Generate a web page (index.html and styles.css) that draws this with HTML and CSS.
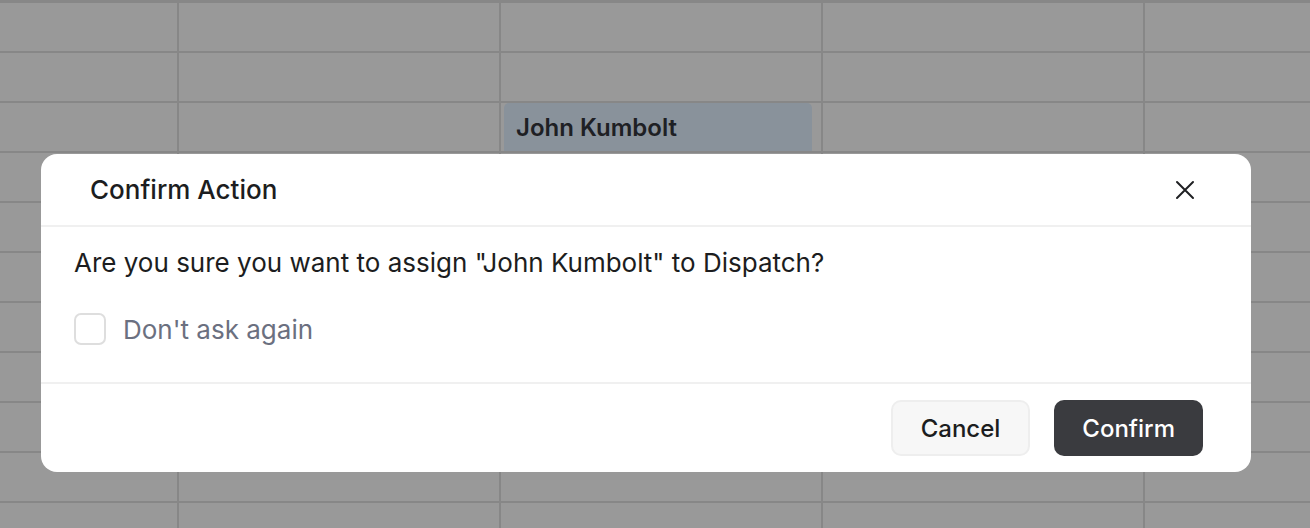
FILE: index.html
```html
<!DOCTYPE html>
<html lang="en">
<head>
  <meta charset="UTF-8">
  <meta name="viewport" content="width=device-width, initial-scale=1.0">
  <title>Confirm Action</title>
  <link rel="stylesheet" href="styles.css">
</head>
<body>
  <div class="sheet">
    <div class="grid">
      <div class="cell"></div><div class="cell"></div><div class="cell"></div><div class="cell"></div><div class="cell"></div>
      <div class="cell"></div><div class="cell"></div><div class="cell"></div><div class="cell"></div><div class="cell"></div>
      <div class="cell"></div><div class="cell"></div>
      <div class="cell cell-filled"><div class="card">John Kumbolt</div></div>
      <div class="cell"></div><div class="cell"></div>
      <div class="cell"></div><div class="cell"></div><div class="cell"></div><div class="cell"></div><div class="cell"></div>
      <div class="cell"></div><div class="cell"></div><div class="cell"></div><div class="cell"></div><div class="cell"></div>
      <div class="cell"></div><div class="cell"></div><div class="cell"></div><div class="cell"></div><div class="cell"></div>
      <div class="cell"></div><div class="cell"></div><div class="cell"></div><div class="cell"></div><div class="cell"></div>
      <div class="cell"></div><div class="cell"></div><div class="cell"></div><div class="cell"></div><div class="cell"></div>
      <div class="cell"></div><div class="cell"></div><div class="cell"></div><div class="cell"></div><div class="cell"></div>
      <div class="cell"></div><div class="cell"></div><div class="cell"></div><div class="cell"></div><div class="cell"></div>
      <div class="cell"></div><div class="cell"></div><div class="cell"></div><div class="cell"></div><div class="cell"></div>
    </div>
  </div>

  <div class="modal">
    <div class="modal-header">
      <h2 class="modal-title">Confirm Action</h2>
      <button class="modal-close" aria-label="Close">
        <svg width="20" height="20" viewBox="0 0 20 20" fill="none" stroke="#1f2023" stroke-width="2" stroke-linecap="round">
          <path d="M2 2 L18 18 M18 2 L2 18"/>
        </svg>
      </button>
    </div>
    <div class="modal-body">
      <p class="modal-text">Are you sure you want to assign "John Kumbolt" to Dispatch?</p>
      <label class="check-row">
        <input type="checkbox" class="check-box">
        <span class="check-label">Don't ask again</span>
      </label>
    </div>
    <div class="modal-footer">
      <button class="btn btn-cancel">Cancel</button>
      <button class="btn btn-confirm">Confirm</button>
    </div>
  </div>
</body>
</html>
```

FILE: styles.css
```css
html, body {
  margin: 0;
  padding: 0;
}
body {
  width: 1310px;
  height: 528px;
  overflow: hidden;
  background-color: #999999;
  font-family: Inter, "Liberation Sans", sans-serif;
  position: relative;
}
.sheet {
  padding-top: 1px;
  background-color: #878787;
  height: 527px;
}
.grid {
  display: grid;
  grid-template-columns: 177px 320px 320px 320px 1fr;
  grid-auto-rows: 48px;
  column-gap: 2px;
  row-gap: 2px;
  padding-top: 2px;
}
.cell {
  background-color: #999999;
}
.cell-filled {
  padding: 0 9px 0 3px;
}
.card {
  height: 100%;
  background-color: #89929b;
  border-radius: 5px 5px 0 0;
  padding: 10px 12px 0;
  box-sizing: border-box;
  font-size: 24px;
  font-weight: 600;
  color: #1e2024;
}

.modal {
  position: absolute;
  left: 41px;
  top: 154px;
  width: 1210px;
  background-color: #ffffff;
  border-radius: 16px;
  overflow: hidden;
}
.modal-header {
  display: flex;
  align-items: center;
  justify-content: space-between;
  height: 71px;
  padding: 0 56px 0 49px;
  border-bottom: 2px solid #f0f0f0;
}
.modal-title {
  margin: 0;
  font-size: 26px;
  font-weight: 500;
  color: #1c1d20;
}
.modal-close {
  display: flex;
  align-items: center;
  justify-content: center;
  width: 20px;
  height: 20px;
  padding: 0;
  border: none;
  background: none;
  cursor: pointer;
}
.modal-body {
  padding: 20px 33px 37px;
  border-bottom: 2px solid #f0f0f0;
}
.modal-text {
  margin: 0 0 34px;
  font-size: 26px;
  line-height: 32px;
  color: #1c1d20;
}
.check-row {
  display: flex;
  align-items: center;
  gap: 17px;
}
.check-box {
  appearance: none;
  -webkit-appearance: none;
  margin: 0;
  width: 32px;
  height: 32px;
  border: 2px solid #dedede;
  border-radius: 7px;
  background-color: #ffffff;
}
.check-label {
  font-size: 26px;
  color: #6b7080;
}
.modal-footer {
  display: flex;
  justify-content: flex-end;
  gap: 24px;
  padding: 16px 48px 16px;
}
.btn {
  height: 56px;
  padding: 0 28px;
  border-radius: 10px;
  font-family: Inter, "Liberation Sans", sans-serif;
  font-size: 24px;
  font-weight: 500;
  cursor: pointer;
}
.btn-cancel {
  background-color: #f7f7f7;
  border: 2px solid #eeeeee;
  color: #1c1d20;
}
.btn-confirm {
  background-color: #3a3b3f;
  border: none;
  color: #ffffff;
}
```
